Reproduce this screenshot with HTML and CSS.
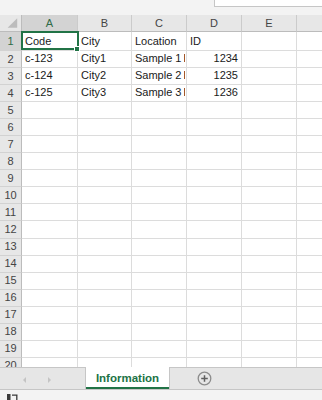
FILE: index.html
```html
<!DOCTYPE html>
<html>
<head>
<meta charset="utf-8">
<link rel="stylesheet" href="styles.css">
</head>
<body>
<div class="top"><div class="namebox"></div></div>
<div class="sheet">
  <div class="c corner"><svg width="22" height="17" viewBox="0 0 22 17"><polygon points="8,13 18,13 18,3" fill="#bcbcbc"/></svg></div>
  <div class="c ch sel">A</div><div class="c ch">B</div><div class="c ch">C</div><div class="c ch">D</div><div class="c ch">E</div><div class="c ch last"></div>

  <div class="c rh sel">1</div><div class="c">Code</div><div class="c">City</div><div class="c">Location</div><div class="c">ID</div><div class="c"></div><div class="c last"></div>
  <div class="c rh">2</div><div class="c">c-123</div><div class="c">City1</div><div class="c">Sample 1<span class="mark"></span></div><div class="c num">1234</div><div class="c"></div><div class="c last"></div>
  <div class="c rh">3</div><div class="c">c-124</div><div class="c">City2</div><div class="c">Sample 2<span class="mark"></span></div><div class="c num">1235</div><div class="c"></div><div class="c last"></div>
  <div class="c rh">4</div><div class="c">c-125</div><div class="c">City3</div><div class="c">Sample 3<span class="mark"></span></div><div class="c num">1236</div><div class="c"></div><div class="c last"></div>
  <div class="c rh">5</div><div class="c"></div><div class="c"></div><div class="c"></div><div class="c"></div><div class="c"></div><div class="c last"></div>
  <div class="c rh">6</div><div class="c"></div><div class="c"></div><div class="c"></div><div class="c"></div><div class="c"></div><div class="c last"></div>
  <div class="c rh">7</div><div class="c"></div><div class="c"></div><div class="c"></div><div class="c"></div><div class="c"></div><div class="c last"></div>
  <div class="c rh">8</div><div class="c"></div><div class="c"></div><div class="c"></div><div class="c"></div><div class="c"></div><div class="c last"></div>
  <div class="c rh">9</div><div class="c"></div><div class="c"></div><div class="c"></div><div class="c"></div><div class="c"></div><div class="c last"></div>
  <div class="c rh">10</div><div class="c"></div><div class="c"></div><div class="c"></div><div class="c"></div><div class="c"></div><div class="c last"></div>
  <div class="c rh">11</div><div class="c"></div><div class="c"></div><div class="c"></div><div class="c"></div><div class="c"></div><div class="c last"></div>
  <div class="c rh">12</div><div class="c"></div><div class="c"></div><div class="c"></div><div class="c"></div><div class="c"></div><div class="c last"></div>
  <div class="c rh">13</div><div class="c"></div><div class="c"></div><div class="c"></div><div class="c"></div><div class="c"></div><div class="c last"></div>
  <div class="c rh">14</div><div class="c"></div><div class="c"></div><div class="c"></div><div class="c"></div><div class="c"></div><div class="c last"></div>
  <div class="c rh">15</div><div class="c"></div><div class="c"></div><div class="c"></div><div class="c"></div><div class="c"></div><div class="c last"></div>
  <div class="c rh">16</div><div class="c"></div><div class="c"></div><div class="c"></div><div class="c"></div><div class="c"></div><div class="c last"></div>
  <div class="c rh">17</div><div class="c"></div><div class="c"></div><div class="c"></div><div class="c"></div><div class="c"></div><div class="c last"></div>
  <div class="c rh">18</div><div class="c"></div><div class="c"></div><div class="c"></div><div class="c"></div><div class="c"></div><div class="c last"></div>
  <div class="c rh">19</div><div class="c"></div><div class="c"></div><div class="c"></div><div class="c"></div><div class="c"></div><div class="c last"></div>
  <div class="c rh">20</div><div class="c"></div><div class="c"></div><div class="c"></div><div class="c"></div><div class="c"></div><div class="c last"></div>

  <div class="selbox"></div>
  <div class="handle"></div>
</div>
<div class="tabs">
  <div class="nav"><svg width="85" height="21" viewBox="0 0 85 21"><polygon points="26,9 26,15 23,12" fill="#c4c4c4"/><polygon points="48,9 48,15 51,12" fill="#c4c4c4"/></svg></div>
  <div class="tab">Information</div>
  <div class="rest"><svg class="plus" width="15" height="15" viewBox="0 0 15 15"><circle cx="7.5" cy="7.5" r="6.3" fill="none" stroke="#8c8c8c" stroke-width="1.3"/><path d="M7.5 4.2V10.8M4.2 7.5H10.8" stroke="#5f5f5f" stroke-width="1.5"/></svg></div>
</div>
<div class="status"><svg width="22" height="10" viewBox="0 0 22 10"><rect x="7" y="4" width="3.5" height="6" fill="#3a3a3a"/><path d="M12 5.2H17.5M16.8 5.2V10" stroke="#3a3a3a" stroke-width="1.3" fill="none"/></svg></div>
</body>
</html>
```

FILE: styles.css
```css
html, body {
  margin: 0;
  padding: 0;
}
body {
  width: 322px;
  height: 400px;
  overflow: hidden;
  background: #ffffff;
  font-family: "Liberation Sans", Arial, sans-serif;
}
.top {
  height: 15px;
  background: #f3f3f3;
  display: flex;
  justify-content: flex-end;
  align-items: flex-start;
}
.namebox {
  width: 107px;
  height: 6px;
  background: #ffffff;
  border-left: 1px solid #c6c6c6;
  border-bottom: 1px solid #c6c6c6;
}
.sheet {
  position: relative;
  height: 352px;
  overflow: hidden;
  display: grid;
  grid-template-columns: 22px 56px 54px 55px 55px 55px 1fr;
  grid-template-rows: 17px 19px repeat(19, 17.05px);
}
.c {
  box-sizing: border-box;
  border-right: 1px solid #dcdcdc;
  border-bottom: 1px solid #dcdcdc;
  font-size: 11px;
  line-height: 13px;
  color: #1a1a1a;
  padding: 0 2px 2px 3px;
  display: flex;
  align-items: flex-end;
  white-space: nowrap;
  overflow: hidden;
}
.c.last {
  border-right: none;
}
.num {
  justify-content: flex-end;
  padding-right: 3px;
}
.mark {
  display: block;
  flex: 0 0 1px;
  width: 1px;
  height: 8px;
  margin: 0 0 3px 3px;
  background: #a4582a;
}
.corner {
  background: #e7e7e7;
  border-right-color: #bcbcbc;
  border-bottom-color: #bcbcbc;
  padding: 0;
  align-items: flex-start;
}
.ch {
  background: #e7e7e7;
  border-right-color: #cbcbcb;
  border-bottom-color: #bcbcbc;
  justify-content: center;
  align-items: center;
  color: #444444;
  padding: 0;
}
.rh {
  background: #e7e7e7;
  border-right-color: #bcbcbc;
  border-bottom-color: #d2d2d2;
  justify-content: center;
  align-items: center;
  color: #444444;
  padding: 0;
}
.sel {
  background: #d3d3d3;
  color: #2f6b47;
}
.selbox {
  position: absolute;
  left: 21px;
  top: 16px;
  width: 58px;
  height: 19px;
  box-sizing: border-box;
  border: 2px solid #217346;
}
.handle {
  position: absolute;
  left: 74px;
  top: 31px;
  width: 4px;
  height: 4px;
  background: #217346;
  border: 1px solid #ffffff;
}
.tabs {
  display: flex;
  height: 22px;
  border-bottom: 1px solid #c6c6c6;
}
.nav {
  width: 85px;
  background: #e6e6e6;
  border-top: 1px solid #c6c6c6;
  border-right: 1px solid #c6c6c6;
}
.nav svg {
  display: block;
}
.tab {
  width: 83px;
  box-sizing: border-box;
  background: #ffffff;
  border-bottom: 2px solid #217346;
  color: #217346;
  font-weight: bold;
  font-size: 11.5px;
  display: flex;
  align-items: center;
  justify-content: center;
  padding-top: 2px;
}
.rest {
  flex: 1;
  background: #e6e6e6;
  border-top: 1px solid #c6c6c6;
  border-left: 1px solid #c6c6c6;
  display: flex;
  align-items: center;
}
.plus {
  margin-left: 27px;
  display: block;
}
.status {
  height: 10px;
  background: #f3f3f3;
}
.status svg {
  display: block;
}
```
